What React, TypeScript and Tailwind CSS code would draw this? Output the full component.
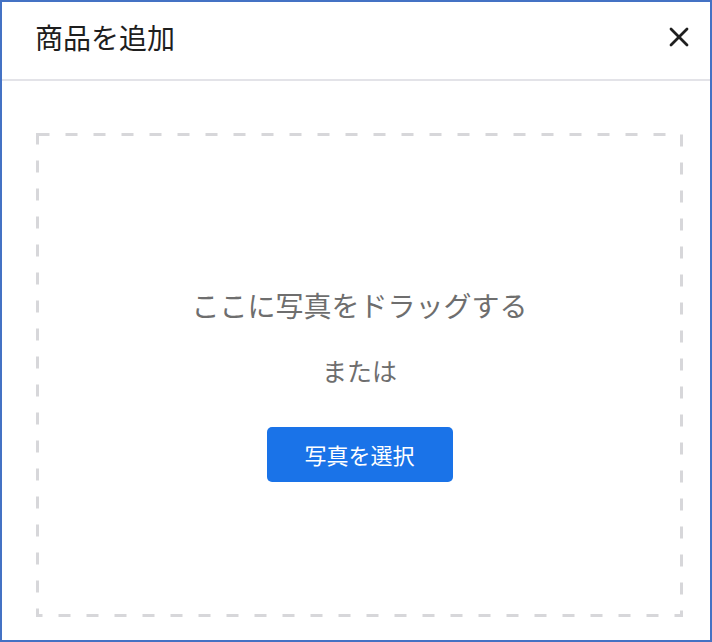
import { X } from "lucide-react";

const font = {
  fontFamily: '"Noto Sans CJK JP", "Noto Sans", sans-serif',
};

export default function App() {
  return (
    <div
      className="w-[712px] h-[642px] bg-white border-2 border-[#4472c4] flex flex-col"
      style={font}
    >
      {/* header */}
      <div className="h-[79px] flex items-center justify-between pl-[33px] pr-[15px] pb-[7px] border-b-2 border-[#e3e3e8] shrink-0">
        <h1 className="text-[28px] text-[#1e1e1e] leading-none">商品を追加</h1>
        <button className="text-[#1f1f1f]" aria-label="close">
          <X className="w-[32px] h-[32px]" strokeWidth={2.1} />
        </button>
      </div>

      {/* drop area */}
      <div className="flex-1 pt-[52px] pb-[23px] pl-[34px] pr-[27px]">
        <div className="relative h-full flex flex-col items-center pt-[158px]">
          <svg className="absolute inset-0 w-full h-full pointer-events-none">
            <rect
              x="1.5"
              y="1.5"
              width="calc(100% - 3px)"
              height="calc(100% - 3px)"
              fill="none"
              stroke="#d7d7da"
              strokeWidth="3"
              strokeDasharray="12 16"
            />
          </svg>
          <p className="text-[28px] text-[#6e6e6e] leading-none">
            ここに写真をドラッグする
          </p>
          <p className="text-[25px] text-[#6e6e6e] leading-none mt-[39px]">
            または
          </p>
          <button className="mt-[44px] w-[186px] h-[55px] rounded-[5px] bg-[#1a73e8] text-white text-[22px]">
            写真を選択
          </button>
        </div>
      </div>
    </div>
  );
}
